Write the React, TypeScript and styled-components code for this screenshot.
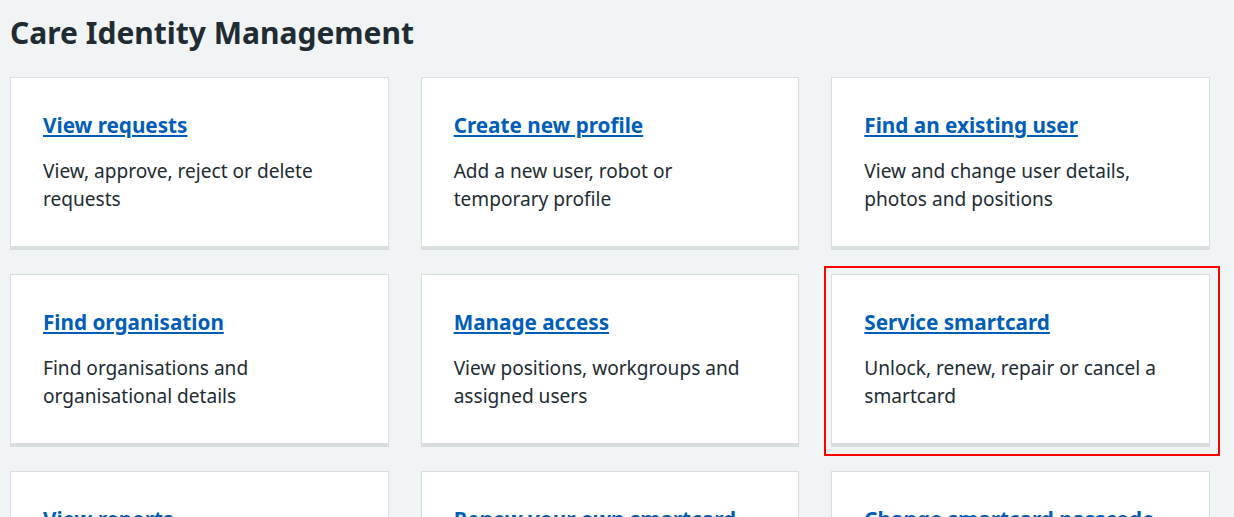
import React from "react";
import styled, { createGlobalStyle } from "styled-components";

const GlobalStyle = createGlobalStyle`
  html, body {
    margin: 0;
    height: 517px;
    overflow: hidden;
    background: #f0f4f5;
  }
`;

const Page = styled.div`
  box-sizing: border-box;
  width: 1220px;
  height: 517px;
  overflow: hidden;
  padding: 13px 10px 0;
  font-family: "Noto Sans", "Open Sans", Arial, sans-serif;
  color: #212b32;
`;

const Title = styled.h1`
  margin: 0 0 24px;
  font-size: 30px;
  line-height: 40px;
  font-weight: 700;
`;

const Grid = styled.div`
  display: grid;
  grid-template-columns: repeat(3, 1fr);
  column-gap: 32px;
  row-gap: 24px;
`;

const Card = styled.div<{ $marked?: boolean }>`
  position: relative;
  box-sizing: border-box;
  height: 173px;
  padding: 33px 32px 0;
  background: #fff;
  border: 1px solid #d8dde0;
  border-bottom: 4px solid #d8dde0;

  ${(p) =>
    p.$marked &&
    `
    &::after {
      content: "";
      position: absolute;
      inset: -9px -11px -13px -8px;
      border: 2px solid #f00;
      pointer-events: none;
    }
  `}
`;

const CardLink = styled.a`
  display: block;
  margin-bottom: 18px;
  font-size: 20.7px;
  line-height: 28px;
  font-weight: 700;
  color: #005eb8;
  text-decoration: underline;
`;

const CardText = styled.p`
  margin: 0;
  font-size: 19.1px;
  line-height: 28px;
`;

const cards = [
  { title: "View requests", text: "View, approve, reject or delete requests" },
  { title: "Create new profile", text: "Add a new user, robot or temporary profile" },
  { title: "Find an existing user", text: "View and change user details, photos and positions" },
  { title: "Find organisation", text: "Find organisations and organisational details" },
  { title: "Manage access", text: "View positions, workgroups and assigned users" },
  { title: "Service smartcard", text: "Unlock, renew, repair or cancel a smartcard", marked: true },
  { title: "View reports", text: "" },
  { title: "Renew your own smartcard", text: "" },
  { title: "Change smartcard passcode", text: "" },
];

export default function App() {
  return (
    <Page>
      <GlobalStyle />
      <Title>Care Identity Management</Title>
      <Grid>
        {cards.map((c) => (
          <Card key={c.title} $marked={c.marked}>
            <CardLink href="#">{c.title}</CardLink>
            <CardText>{c.text}</CardText>
          </Card>
        ))}
      </Grid>
    </Page>
  );
}
